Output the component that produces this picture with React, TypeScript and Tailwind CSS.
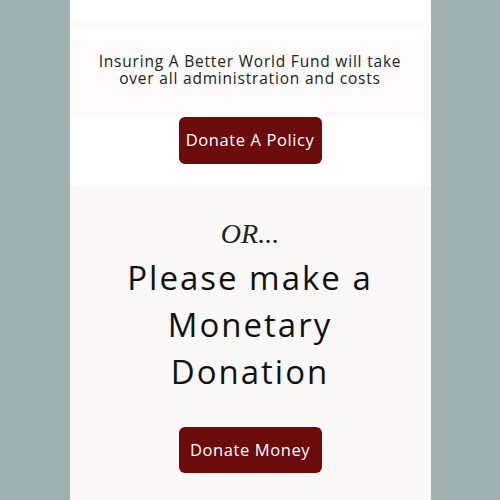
import React from 'react';

export default function App() {
    return (
        <div className="min-h-[500px] w-full bg-[#9fb0b0] flex justify-center" style={{ fontFamily: '"Open Sans", Lato, sans-serif' }}>
            <div className="w-[361px] flex flex-col">
                {/* Top section */}
                <div className="bg-white h-[186px] flex flex-col">
                    <div className="h-[20px]" />
                    <div className="h-[10px] bg-[#fcfbfa]" />
                    <div className="h-[10px]" />
                    <div className="bg-[#fcfbfa] h-[77px] flex flex-col items-center pt-[11px] gap-[0px] text-[15.5px] leading-[21px] text-[#222] text-center tracking-[0.8px]">
                        <span className="-mb-[4px]">Insuring A Better World Fund will take</span>
                        <span>over all administration and costs</span>
                    </div>
                    <div className="flex justify-center">
                        <button className="w-[143px] h-[47px] bg-[#6b0b0b] rounded-[6px] text-white text-[16.5px] tracking-[0.6px]">
                            Donate A Policy
                        </button>
                    </div>
                </div>

                {/* Monetary section */}
                <div className="bg-[#f9f8f6] flex-1 flex flex-col items-center pt-[30px] pb-[26px]">
                    <p className="text-[28px] leading-[36px] italic text-[#222]" style={{ fontFamily: '"Liberation Serif", serif' }}>
                        OR...
                    </p>
                    <h2 className="mt-[2px] text-[33px] leading-[47px] text-[#111] text-center tracking-[2px]">
                        Please make a<br />Monetary<br />Donation
                    </h2>
                    <button className="mt-[32px] w-[143px] h-[46px] bg-[#6b0b0b] rounded-[6px] text-white text-[16.5px] tracking-[0.6px]">
                        Donate Money
                    </button>
                </div>
            </div>
        </div>
    );
}
